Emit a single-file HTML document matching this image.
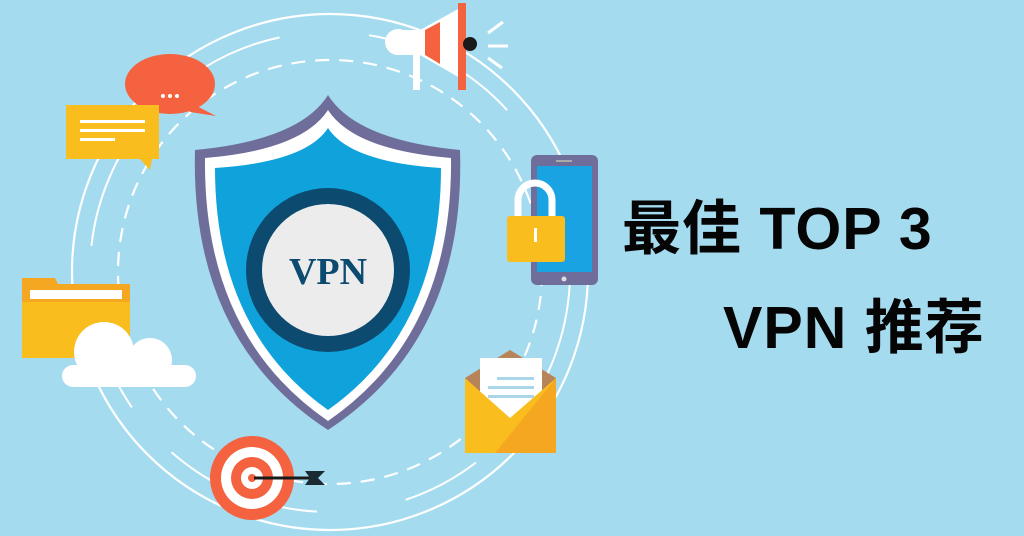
<!DOCTYPE html>
<html><head><meta charset="utf-8"><style>
html,body{margin:0;padding:0;width:1024px;height:536px;overflow:hidden;background:#a4dbef}
svg{display:block}
.t{font-family:"Liberation Sans","Noto Sans CJK SC",sans-serif;font-weight:bold;font-size:59px;fill:#050505;letter-spacing:1px}
</style></head><body>
<svg width="1024" height="536" viewBox="0 0 1024 536" xmlns="http://www.w3.org/2000/svg">
<rect width="1024" height="536" fill="#a4dbef"/>
<circle cx="330" cy="272" r="258" fill="none" stroke="#fff" stroke-width="2.2"/>
<circle cx="330" cy="272" r="212" fill="none" stroke="#fff" stroke-width="2.2" stroke-dasharray="14 10"/>
<circle cx="330" cy="272" r="240" fill="none" stroke="#fff" stroke-width="2" stroke-dasharray="160 60 80 90"/>
<path d="M328 95 Q300 140 195 150 Q190 340 328 430 Q466 340 460 150 Q356 140 328 95Z" fill="#6f6d9a"/>
<path d="M328 110 Q302 150 205 158 Q203 335 328 421 Q453 335 451 158 Q354 150 328 110Z" fill="#fff"/>
<path d="M328 128 Q306 162 215 168 Q215 330 328 410 Q441 330 441 168 Q350 162 328 128Z" fill="#10a3db"/>
<circle cx="328" cy="270" r="82" fill="#0c4a70"/>
<circle cx="328" cy="270" r="66" fill="#ececec"/>
<text x="328" y="284" text-anchor="middle" font-family="Liberation Serif,serif" font-weight="bold" font-size="38" fill="#0c4a70">VPN</text>
<path d="M395 30 L420 30 L460 8 L460 78 L420 55 L395 55 Z" fill="#fff"/>
<circle cx="398" cy="42" r="13" fill="#fff"/>
<path d="M425 30 L440 22 L440 64 L425 55Z" fill="#f4623f"/>
<rect x="458" y="3" width="8" height="87" fill="#f4623f"/>
<circle cx="470" cy="44" r="7" fill="#1a1a1a"/>
<rect x="413" y="55" width="7" height="35" fill="#fff"/>
<path d="M488 33 L503 22 M488 46 L508 46 M488 58 L502 68" stroke="#fff" stroke-width="3"/>
<ellipse cx="170" cy="84" rx="45" ry="30" fill="#f4623f"/>
<path d="M185 100 L216 116 L190 112Z" fill="#f4623f"/>
<circle cx="163" cy="96" r="2" fill="#fff"/><circle cx="170" cy="96" r="2" fill="#fff"/><circle cx="177" cy="96" r="2" fill="#fff"/>
<rect x="66" y="105" width="93" height="54" fill="#f9bd1e"/>
<path d="M140 159 L150 170 L152 159Z" fill="#f9bd1e"/>
<rect x="80" y="120" width="65" height="3" fill="#fff"/><rect x="80" y="129" width="65" height="3" fill="#fff"/><rect x="80" y="138" width="35" height="3" fill="#fff"/>
<rect x="531" y="155" width="67" height="130" rx="6" fill="#6f6d9a"/>
<rect x="537" y="166" width="55" height="106" fill="#1aa3e2"/>
<circle cx="564" cy="279" r="2.5" fill="#ddd"/>
<rect x="556" y="160" width="16" height="2" fill="#aaa"/>
<path d="M518 218 V200 a17 17 0 0 1 34 0 V218" fill="none" stroke="#fff" stroke-width="7"/>
<rect x="507" y="216" width="58" height="46" rx="3" fill="#f9bd1e"/>
<rect x="534" y="228" width="3" height="14" fill="#fff"/>
<path d="M22 310 L22 278 L55 278 L58 284 L130 284 L130 355 L22 355Z" fill="#f6a722"/>
<rect x="22" y="302" width="108" height="56" fill="#f9bd1e"/>
<rect x="30" y="290" width="92" height="9" fill="#fff"/>
<circle cx="104" cy="352" r="30" fill="#fff"/>
<circle cx="150" cy="360" r="22" fill="#fff"/>
<rect x="62" y="365" width="134" height="22" rx="11" fill="#fff"/>
<path d="M465 378 L510 350 L556 378 L556 453 L465 453Z" fill="#b7845a"/>
<rect x="480" y="358" width="62" height="78" fill="#fff"/>
<rect x="497" y="377" width="37" height="3" fill="#a9d6e8"/><rect x="488" y="386" width="46" height="3" fill="#a9d6e8"/><rect x="488" y="395" width="46" height="3" fill="#a9d6e8"/>
<path d="M465 378 L465 453 L556 453 L556 378 L510 418Z" fill="#f9bd1e"/>
<path d="M556 378 L556 453 L495 453Z" fill="#f6a722"/>
<circle cx="252" cy="478" r="42" fill="#f4623f"/>
<circle cx="252" cy="478" r="31" fill="#fff"/>
<circle cx="252" cy="478" r="21" fill="#f4623f"/>
<circle cx="252" cy="478" r="11" fill="#fff"/>
<circle cx="252" cy="478" r="4" fill="#f4623f"/>
<line x1="254" y1="478" x2="318" y2="478" stroke="#1a1a1a" stroke-width="3"/>
<path d="M305 471 L325 471 L318 478 L325 485 L305 485 L310 478Z" fill="#1a2a33"/>
<text class="t" x="622" y="249">最佳 TOP 3</text>
<text class="t" x="723" y="348">VPN 推荐</text>
</svg>
</body></html>
